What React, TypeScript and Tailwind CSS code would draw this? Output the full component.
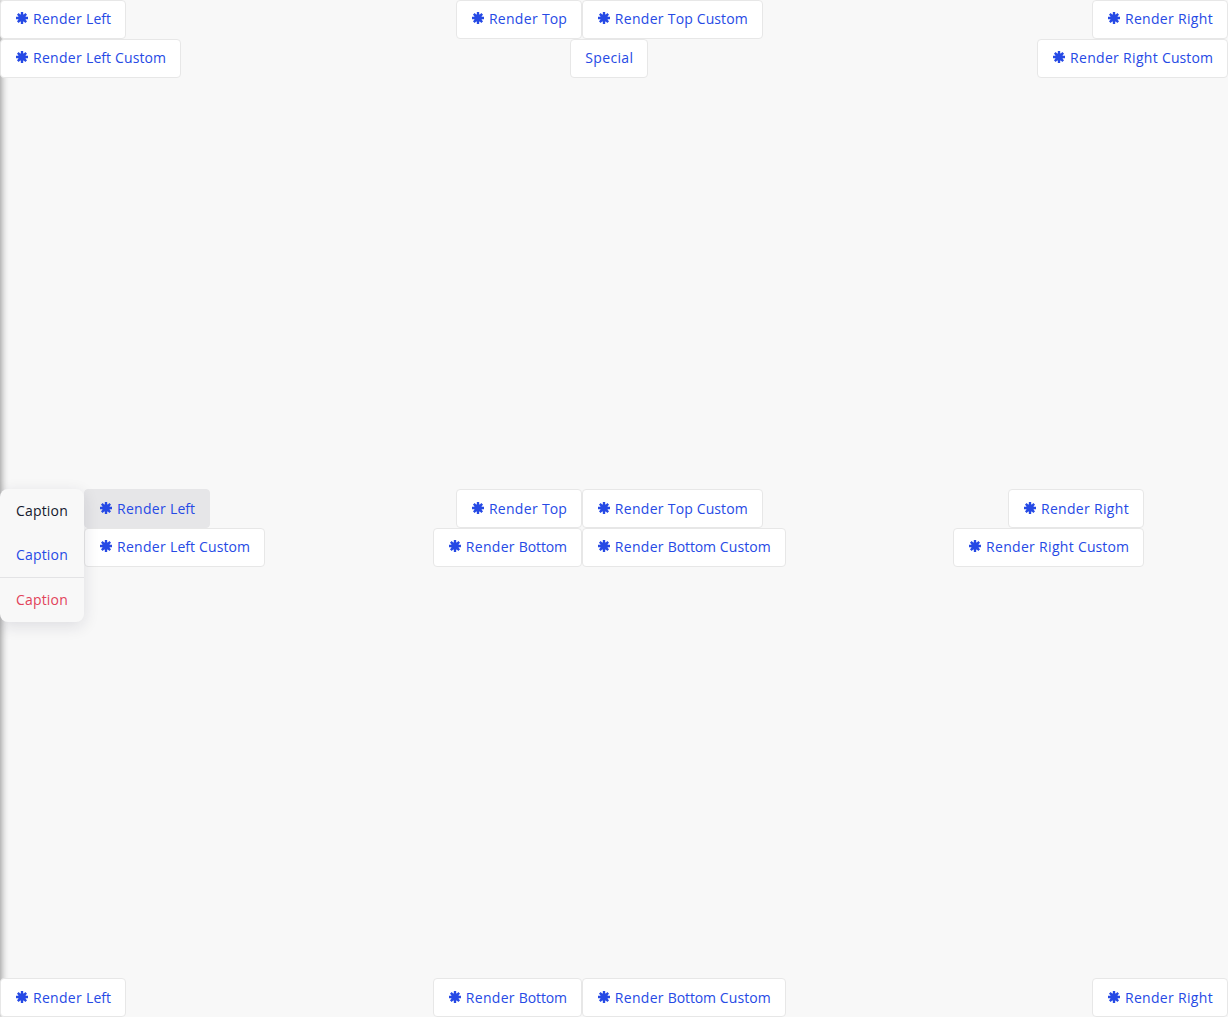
import React from "react";

const tracking: Record<string, string> = {
  Render: "tracking-[0.298px]",
  Left: "tracking-[0.05px]",
  Right: "tracking-[0.32px]",
  Top: "tracking-[0.07px]",
  Bottom: "tracking-[-0.145px]",
  Custom: "tracking-[0.085px]",
  Special: "tracking-[0.34px]",
};

function Asterisk() {
  return (
    <svg className="block h-3 w-3 shrink-0" viewBox="0 0 12 12" stroke="#264ae5" fill="none">
      <path d="M6 0v12M0 6h12M1.8 1.8l8.4 8.4M10.2 1.8l-8.4 8.4" strokeWidth="2.35" />
      <circle cx="6" cy="6" r="2.7" strokeWidth="2.2" />
    </svg>
  );
}

function Button({ label, icon = true, active = false }: { label: string; icon?: boolean; active?: boolean }) {
  return (
    <button
      className={
        "flex h-[38.8px] items-center gap-[5px] whitespace-nowrap rounded border text-sm leading-5 text-[#264ae5] " +
        (icon ? "pl-[15px] pr-[14px] " : "px-[14px] ") +
        (active ? "border-[#e6e6e8] bg-[#e6e6e8]" : "border-[#e7e7e7] bg-white")
      }
    >
      {icon && (
        <span className="pb-[1.9px]">
          <Asterisk />
        </span>
      )}
      <span className="pt-[0.1px] [font-kerning:none] [word-spacing:0.36px]">
        {label.split(" ").map((word, i) => (
          <React.Fragment key={word}>
            {i > 0 && " "}
            <span className={tracking[word]}>{word}</span>
          </React.Fragment>
        ))}
      </span>
    </button>
  );
}

export default function App() {
  return (
    <main className="relative flex h-[1017px] w-[1228px] flex-col justify-between overflow-hidden bg-[#f8f8f8] font-['Open_Sans',sans-serif]">
      <div className="absolute inset-y-0 -left-2 w-2 shadow-[0_0_8px_rgba(0,0,0,0.55)]" />
      <section className="relative flex items-start justify-between">
        <div className="flex flex-col items-start">
          <Button label="Render Left" />
          <Button label="Render Left Custom" />
        </div>
        <div className="flex flex-col items-center pl-[0.5px]">
          <div className="flex">
            <Button label="Render Top" />
            <Button label="Render Top Custom" />
          </div>
          <Button label="Special" icon={false} />
        </div>
        <div className="flex flex-col items-end">
          <Button label="Render Right" />
          <Button label="Render Right Custom" />
        </div>
      </section>

      <section className="relative flex items-start justify-between px-[84px]">
        <div className="flex flex-col items-start">
          <Button label="Render Left" active />
          <Button label="Render Left Custom" />
        </div>
        <div className="flex flex-col items-center pl-[0.5px]">
          <div className="flex">
            <Button label="Render Top" />
            <Button label="Render Top Custom" />
          </div>
          <div className="flex">
            <Button label="Render Bottom" />
            <Button label="Render Bottom Custom" />
          </div>
        </div>
        <div className="flex flex-col items-end">
          <Button label="Render Right" />
          <Button label="Render Right Custom" />
        </div>
        <div className="absolute left-0 top-0 flex w-[84px] flex-col rounded-lg bg-[#f8f8f8] text-sm leading-5 tracking-[0.18px] shadow-[0_4px_16px_rgba(28,28,60,0.12)] [font-kerning:none]">
          <button className="h-11 px-4 text-left text-[#14192d]">Caption</button>
          <button className="h-11 px-4 text-left text-[#264ae5]">Caption</button>
          <button className="h-[45px] border-t border-[#e3e3e5] px-4 text-left text-[#e2435a]">Caption</button>
        </div>
      </section>

      <section className="relative flex items-start justify-between">
        <Button label="Render Left" />
        <div className="flex pl-[0.5px]">
          <Button label="Render Bottom" />
          <Button label="Render Bottom Custom" />
        </div>
        <Button label="Render Right" />
      </section>
    </main>
  );
}
